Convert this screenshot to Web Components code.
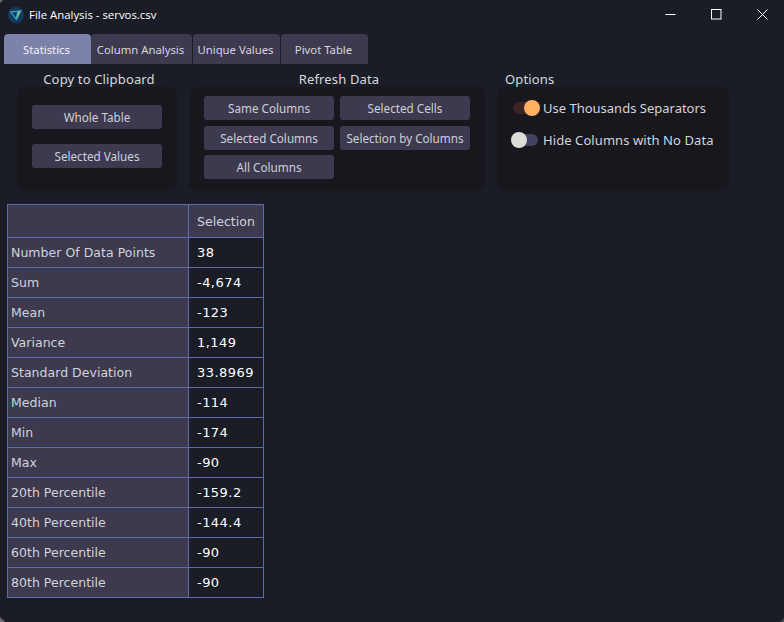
<!DOCTYPE html>
<html><head><meta charset="utf-8"><style>
html,body{margin:0;padding:0;background:#1a1d26;width:784px;height:622px;overflow:hidden}
</style></head><body>
<fa-app></fa-app>
<script>
const UI='"Open Sans","Noto Sans",sans-serif', TX='"DejaVu Sans",sans-serif', NS='"Noto Sans","Open Sans",sans-serif';
class FaTitlebar extends HTMLElement{constructor(){super();this.attachShadow({mode:'open'}).innerHTML=`<style>
:host{display:flex;align-items:center;height:30px;padding-left:8px;color:#fff;font:11.4px ${UI}}
svg{display:block;flex:none}
.t{margin-left:5px;margin-top:-1px}
.c{margin-left:auto;display:flex;margin-top:-2px;margin-right:-1px}
.b{width:46px;height:28px;display:flex;align-items:center;justify-content:center}
</style>
<svg width="16" height="16" viewBox="0 0 16 16"><circle cx="8" cy="8" r="8" fill="#17385f"/><path d="M1.5 4.5 L14 3 L8.5 13.5Z" fill="#2aa8c9"/><path d="M3.8 5.6 L9 5 L7.8 10.6Z" fill="#0e3357"/><path d="M10.5 4.5 L12.2 4.4 L8.8 12Z" fill="#f2a93b"/></svg>
<span class="t">File Analysis - servos.csv</span>
<div class="c">
<div class="b"><svg width="11" height="11"><path d="M0.5 5.5H10.5" stroke="#fff"/></svg></div>
<div class="b"><svg width="11" height="11"><rect x=".5" y=".5" width="9.5" height="9.5" fill="none" stroke="#fff"/></svg></div>
<div class="b"><svg width="11" height="11"><path d="M.5 .5L10.5 10.5M10.5 .5L.5 10.5" stroke="#fff" stroke-width="1"/></svg></div>
</div>`}}
class FaTab extends HTMLElement{constructor(){super();this.attachShadow({mode:'open'}).innerHTML=`<style>
:host{display:flex;align-items:center;justify-content:center;height:30px;box-sizing:border-box;background:#3d3a50;color:#d5d5dc;border-radius:4px 4px 0 0;font:11.3px ${NS};white-space:nowrap;padding-right:2px}
:host([active]){background:#7d82ab;color:#f0f0f4}
</style><slot></slot>`}}
class FaTabs extends HTMLElement{constructor(){super();this.attachShadow({mode:'open'}).innerHTML=`<style>
:host{display:grid;grid-template-columns:87px 101px 88px 88px;margin:4px 0 0 4px;height:30px;width:max-content}
::slotted(:nth-child(n+3)){margin-left:1px}
</style><slot></slot>`}}
class FaGroup extends HTMLElement{constructor(){super();this.attachShadow({mode:'open'}).innerHTML=`<style>
:host{display:flex;flex-direction:column;flex:none}
.h{height:16px;display:flex;align-items:center;justify-content:center;color:#d8d8de;font:13px ${NS};letter-spacing:.15px;padding-left:4px;box-sizing:border-box}
:host([left]) .h{justify-content:flex-start;padding-left:8px}
.b{height:104px;background:#17171d;border-radius:8px;box-sizing:border-box}
</style><div class="h">${this.getAttribute('label')||''}</div><div class="b"><slot></slot></div>`}}
class FaButton extends HTMLElement{constructor(){super();this.attachShadow({mode:'open'}).innerHTML=`<style>
:host{display:flex;align-items:center;justify-content:center;width:130px;height:24px;background:#3d3a50;border-radius:3px;color:#ccd0d8;font:11.7px ${NS};white-space:nowrap}
</style><slot></slot>`}}
class FaSwitch extends HTMLElement{constructor(){super();this.attachShadow({mode:'open'}).innerHTML=`<style>
:host{display:flex;align-items:center;height:24px;color:#d2d5dc;font:13px ${NS};letter-spacing:.08px;white-space:nowrap}
:host([on]){letter-spacing:0}
.s{position:relative;width:26px;height:12px;flex:none;margin-right:5px;border-radius:6px;background:#42415f}
.k{position:absolute;left:-1px;top:-2px;width:16px;height:16px;border-radius:50%;background:#dcddd8}
:host([on]) .s{background:#3a2526;margin-left:1px;margin-right:4px}
:host([on]) .k{left:auto;right:-1px;background:#ffb061}
</style><div class="s"><div class="k"></div></div><slot></slot>`}}
class FaTable extends HTMLElement{constructor(){super();const rows=[['Number Of Data Points','38'],['Sum','-4,674'],['Mean','-123'],['Variance','1,149'],['Standard Deviation','33.8969'],['Median','-114'],['Min','-174'],['Max','-90'],['20th Percentile','-159.2'],['40th Percentile','-144.4'],['60th Percentile','-90'],['80th Percentile','-90']];
this.attachShadow({mode:'open'}).innerHTML=`<style>
:host{display:grid;grid-template-columns:180px 74px;grid-template-rows:32px repeat(12,29px);gap:1px;background:#5f6ca8;border:1px solid #5f6ca8;width:max-content;font:12.5px ${TX};letter-spacing:.03px}
div{display:flex;align-items:center;white-space:nowrap;box-sizing:border-box}
.k{background:#3d3a50;color:#cfd3da;padding-left:3px}
.v{background:#1a1d26;color:#fff;padding-left:8px;font-size:13px;letter-spacing:.45px}
.hv{background:#3d3a50;color:#cfd3da;padding-left:8px}
</style><div class="k"></div><div class="hv">Selection</div>${rows.map(r=>`<div class="k">${r[0]}</div><div class="v">${r[1]}</div>`).join('')}`}}
class FaCorners extends HTMLElement{constructor(){super();this.attachShadow({mode:'open'}).innerHTML=`<style>
:host{position:fixed;inset:0;pointer-events:none;display:block}
div{position:absolute}
.tl{left:0;top:0;width:3px;height:3px;background:#6d6a72;clip-path:polygon(0 0,100% 0,0 100%)}
.bl{left:0;bottom:0;width:5px;height:5px;background:#6d6a72;clip-path:polygon(0 0,100% 100%,0 100%)}
.br{right:0;bottom:0;width:4px;height:4px;background:#4a4850;clip-path:polygon(100% 0,100% 100%,0 100%)}
</style><div class="tl"></div><div class="bl"></div><div class="br"></div>`}}
class FaApp extends HTMLElement{constructor(){super();this.attachShadow({mode:'open'}).innerHTML=`<style>
:host{display:block}
.groups{display:flex;gap:12px;margin:7px 0 0 17px}
.col{display:flex;flex-direction:column;gap:15px;padding:18px 15px}
.gridb{display:grid;grid-template-columns:130px 130px;column-gap:6px;grid-template-rows:24px 24px 24px;padding:9px 15px;row-gap:5.5px}
.opts{display:flex;flex-direction:column;gap:8px;padding:9px 0 0 15px}
fa-table{margin:13px 0 0 7px}
</style>
<fa-titlebar></fa-titlebar>
<fa-tabs><fa-tab active>Statistics</fa-tab><fa-tab>Column Analysis</fa-tab><fa-tab>Unique Values</fa-tab><fa-tab>Pivot Table</fa-tab></fa-tabs>
<div class="groups">
<fa-group label="Copy to Clipboard" style="width:160px"><div class="col"><fa-button>Whole Table</fa-button><fa-button>Selected Values</fa-button></div></fa-group>
<fa-group label="Refresh Data" style="width:296px"><div class="gridb"><fa-button>Same Columns</fa-button><fa-button>Selected Cells</fa-button><fa-button>Selected Columns</fa-button><fa-button>Selection by Columns</fa-button><fa-button>All Columns</fa-button></div></fa-group>
<fa-group label="Options" left style="width:232px"><div class="opts"><fa-switch on>Use Thousands Separators</fa-switch><fa-switch>Hide Columns with No Data</fa-switch></div></fa-group>
</div>
<fa-table></fa-table>
<fa-corners></fa-corners>`}}
[['fa-titlebar',FaTitlebar],['fa-tab',FaTab],['fa-tabs',FaTabs],['fa-group',FaGroup],['fa-button',FaButton],['fa-switch',FaSwitch],['fa-table',FaTable],['fa-corners',FaCorners],['fa-app',FaApp]].forEach(([n,c])=>customElements.define(n,c));
</script>
</body></html>
